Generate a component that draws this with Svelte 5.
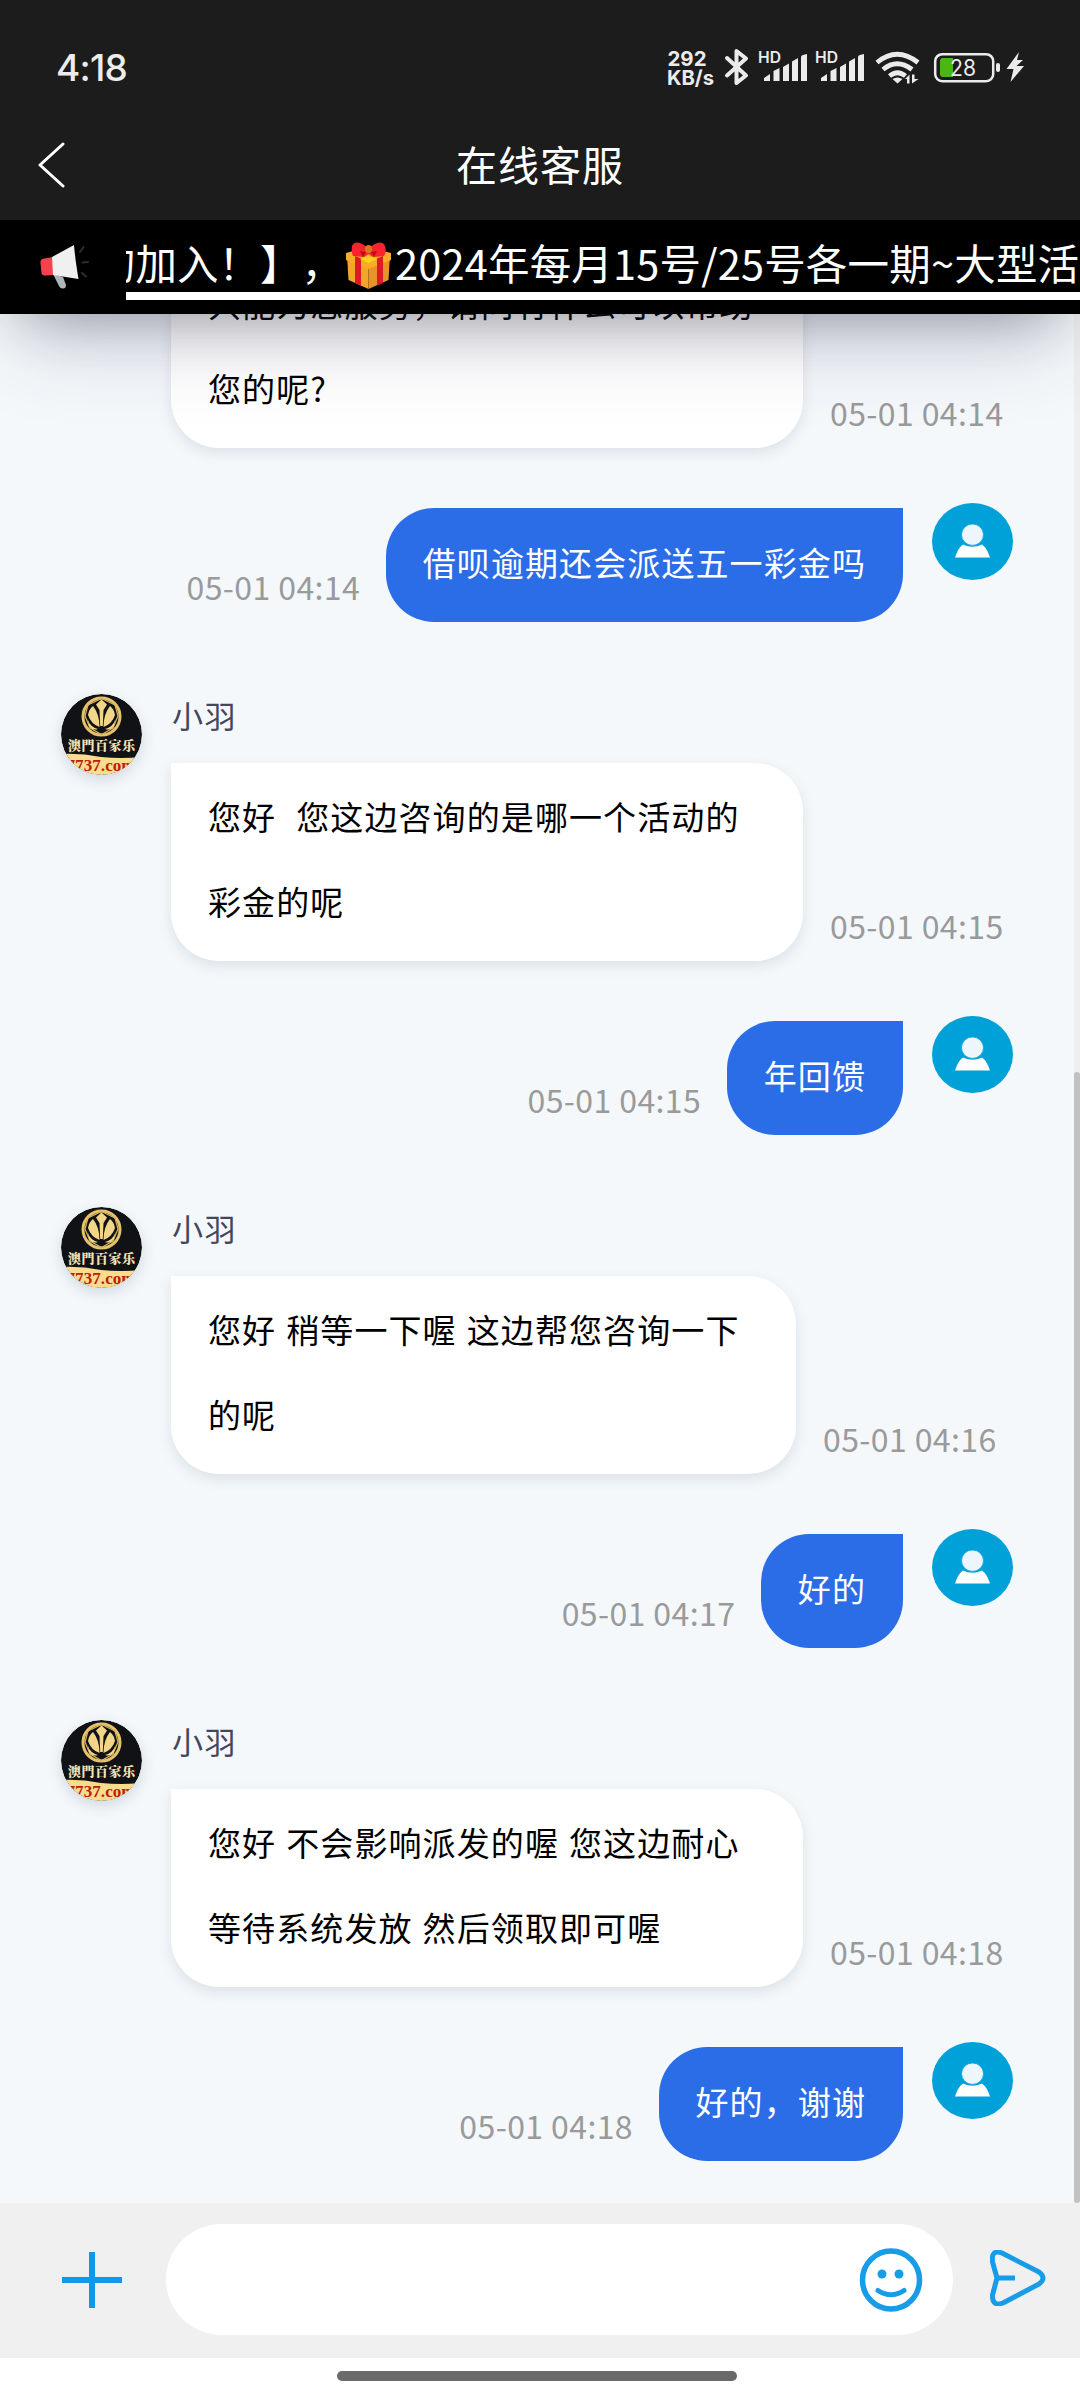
<script>
    let messages = [
        { from: 'agent', width: 632, time: '05-01 04:14', lines: ['只能为您服务，请问有什么可以帮助', '您的呢?'] },
        { from: 'user', time: '05-01 04:14', lines: ['借呗逾期还会派送五一彩金吗'] },
        { from: 'agent', width: 632, time: '05-01 04:15', lines: ['您好  您这边咨询的是哪一个活动的', '彩金的呢'] },
        { from: 'user', time: '05-01 04:15', lines: ['年回馈'] },
        { from: 'agent', width: 625, time: '05-01 04:16', lines: ['您好 稍等一下喔 这边帮您咨询一下', '的呢'] },
        { from: 'user', time: '05-01 04:17', lines: ['好的'] },
        { from: 'agent', width: 632, time: '05-01 04:18', lines: ['您好 不会影响派发的喔 您这边耐心', '等待系统发放 然后领取即可喔'] },
        { from: 'user', time: '05-01 04:18', lines: ['好的，谢谢'] }
    ]

    let draft = ''
    const signals = [104, 161]
</script>

<div class="screen">
    <header>
        <div class="status">
            <span class="clock">4:18</span>
            <svg width="372" height="50" viewBox="660 44 372 50" fill="#ebebeb">
                <g font-family="Inter, sans-serif" font-weight="700">
                    <text x="667.500" y="65.800" font-size="20.500" textLength="39" lengthAdjust="spacingAndGlyphs">292</text>
                    <text x="667" y="84.500" font-size="20" textLength="47" lengthAdjust="spacingAndGlyphs">KB/s</text>
                </g>
                <path d="M727 58 L746 75.500 L736.500 83 V51 L746 58.500 L727 75.500" fill="none" stroke="#ebebeb" stroke-width="4" stroke-linejoin="round" stroke-linecap="round" />
                {#each signals as x}
                    <g transform="translate({x + 655} 0)">
                        <text x="-1" y="63" font-size="15.500" font-family="Inter, sans-serif" font-weight="600" textLength="23" lengthAdjust="spacingAndGlyphs">HD</text>
                        <path d="M5 81 V78 L11 74 V81 Z M14.500 81 V71 L20.500 68 V81 Z M24 81 V67 L30 63.500 V81 Z M33 81 V61.500 L39 58 V81 Z M42 81 V57 Q42 55.500 44 55 L48 54 V81 Z" />
                    </g>
                {/each}
                <g fill="none" stroke="#ebebeb" stroke-width="4.800">
                    <path d="M877 62.500 Q897 46 918 62.500" />
                    <path d="M883 69.500 Q897 58 912 69.500" />
                    <path d="M889.500 76 Q897.500 69.500 905.500 76" />
                </g>
                <path d="M892.500 79 Q897.500 76 902.500 79 L897.500 83.500 Z M905 79 L909.500 74.500 V83.500 H907 V79 Z M912 83.500 V74.500 H914.500 V79 H918.500 Z" />
                <rect x="935.200" y="54.200" width="58" height="27" rx="7" fill="none" stroke="#ebebeb" stroke-width="2.500" />
                <path d="M943 58 H953 V77 H943 Q940 77 940 74 V61 Q940 58 943 58 Z" fill="#4cb714" />
                <text x="950" y="75.500" font-size="23" font-family="Inter, sans-serif" textLength="26" lengthAdjust="spacingAndGlyphs">28</text>
                <rect x="996" y="63" width="4" height="9" rx="2" />
                <path d="M1019 52 L1006.500 69 H1013.500 L1010.500 82 L1024 66 H1016.500 L1023 60 H1017 Z" />
            </svg>
        </div>
        <div class="titlebar">
            <svg class="back" width="30" height="46" viewBox="0 0 30 46">
                <path d="M26 2 L3 23 L26 44" fill="none" stroke="#fff" stroke-width="3" stroke-linecap="round" stroke-linejoin="round" />
            </svg>
            <h1>在线客服</h1>
        </div>
        <div class="notice">
            <svg class="horn" width="50" height="46" viewBox="0 0 50 46">
                <path d="M13 30 L23 33 L26 41 Q26 45 22 44.500 Q20 44 19 42 Z" fill="#aeb5bb" />
                <path d="M13 13 L4 14.500 Q0 15 .5 19 L1.500 29 Q2 32 5 31.500 L14 31 Z" fill="#f5424f" />
                <path d="M12 13 L34 1 Q35 14 38.500 35 L13 31 Z" fill="#f0f0f0" />
                <path d="M40 8 L43.500 3 M42.500 18.500 L48 18 M42 29 L46 32.500" stroke="#2b2d30" stroke-width="2" stroke-linecap="round" />
            </svg>
            <div class="marquee">
                <p>
                    <span>的加入！】，</span>
                    <svg width="45" height="48" viewBox="0 0 45 48">
                        <path d="M1 13 L22.500 20 V47 L2.500 38 Z" fill="#f5a52b" />
                        <path d="M44 13 L22.500 20 V47 L42.500 38 Z" fill="#e8922a" />
                        <path d="M0 11 L22 5 L45 11 V18 L22.500 27 L0 18 Z" fill="#f9ac24" />
                        <path d="M9 14 L15 16.500 V43.500 L9 41 Z M37 14 L31 16.500 V43.500 L37 41 Z" fill="#e01a24" />
                        <path d="M14 17 L22.500 14 L31 17 L22.500 21 Z" fill="#ffd21f" />
                        <path d="M6 4 Q8 -1 14 1 Q20 3 22.500 8 Q25 3 31 1 Q37 -1 39 4 Q41 10 38 14 L27 15 L22.500 12 L18 15 L7 14 Q5 10 6 4 Z" fill="#f8232e" />
                        <path d="M14 9 L20 10 L17 15 Z M31 9 L25 10 L28 15 Z" fill="#b80e18" />
                        <ellipse cx="22.500" cy="7" rx="3.500" ry="4" fill="#d9771c" />
                    </svg>
                    <span class="after">2024年每月15号/25号各一期~大型活动</span>
                </p>
            </div>
        </div>
    </header>

    <main>
        {#each messages as msg}
            <div class="row {msg.from}">
                {#if msg.from == 'agent'}
                    <svg class="avatar" width="81" height="81" viewBox="0 0 81 81">
                        <defs><clipPath id="round"><circle cx="40.500" cy="40.500" r="40.500" /></clipPath></defs>
                        <g clip-path="url(#round)">
                            <rect width="81" height="81" fill="#111216" />
                            <circle cx="40.500" cy="22.500" r="18.500" fill="none" stroke="#e6c36a" stroke-width="3" />
                            <path d="M40.500 4.500 L54 11 L57 22 L52 34 L40.500 40.500 L29 34 L24 22 L27 11 Z" fill="none" stroke="#d9b35c" stroke-width="1.200" />
                            <g fill="#f1d68a">
                                <path d="M40.500 5.500 L46 10.500 L42.500 16 L41.800 32 H39.200 L38.500 16 L35 10.500 Z" />
                                <path d="M32 12 Q38.500 20 38.500 33 Q30 30 27 21 Q28 15 32 12 Z M49 12 Q42.500 20 42.500 33 Q51 30 54 21 Q53 15 49 12 Z" />
                                <path d="M26.500 25 Q29 33 37 35 Q31 37 28 32 Z M54.500 25 Q52 33 44 35 Q50 37 53 32 Z" />
                            </g>
                            <text class="brand" x="7" y="55.500" textLength="67">澳門百家乐</text>
                            <path d="M0 60 Q20 59 40 63 Q60 65 81 63 V81 H0 Z" fill="#f9dc8c" />
                            <text class="site" x="5.500" y="77" textLength="69">7737.com</text>
                        </g>
                    </svg>
                    <div class="body">
                        <div class="name">小羽</div>
                        <div class="line">
                            <div class="bubble" style="width: {msg.width}px">
                                {#each msg.lines as line}<p>{line}</p>{/each}
                            </div>
                            <time>{msg.time}</time>
                        </div>
                    </div>
                {:else}
                    <time>{msg.time}</time>
                    <div class="bubble">
                        {#each msg.lines as line}<p>{line}</p>{/each}
                    </div>
                    <svg class="avatar" width="81" height="77" viewBox="0 0 81 77">
                        <ellipse cx="40.500" cy="38.500" rx="40.500" ry="38.500" fill="#00a1d9" />
                        <path d="M31 41.500 Q40.500 46 50 41.500 Q55 45 58 54.500 H23 Q26 45 31 41.500 Z" fill="#fff" />
                        <ellipse cx="40.500" cy="31.700" rx="11" ry="10.700" fill="#eef6fd" stroke="#00a1d9" stroke-width=".8" />
                    </svg>
                {/if}
            </div>
        {/each}
        <div class="scrollbar"><div class="thumb"></div></div>
    </main>

    <footer>
        <button class="plus" aria-label="更多">
            <svg width="60" height="56" viewBox="0 0 60 56"><path d="M0 28 H60 M30 0 V56" stroke="#0d98ea" stroke-width="6" /></svg>
        </button>
        <div class="field">
            <input type="text" bind:value={draft} aria-label="消息" />
            <svg width="64" height="64" viewBox="0 0 64 64" fill="none" stroke="#179ce8" stroke-width="5.500">
                <ellipse cx="32" cy="32" rx="28.500" ry="29" />
                <path d="M19 42.500 Q32 51 45 42.500" stroke-width="5" stroke-linecap="round" />
                <circle cx="23" cy="26" r="4.500" fill="#179ce8" stroke="none" />
                <circle cx="40" cy="26" r="4.500" fill="#179ce8" stroke="none" />
            </svg>
        </div>
        <button class="send" aria-label="发送">
            <svg width="56" height="56" viewBox="0 0 56 56" fill="none" stroke="#179ce8" stroke-width="5">
                <path d="M12 3 L49 22 Q57 28 49 34 L13 53 Q2 57 2.500 45 L7 28 L2.500 12 Q1 -1 12 3 Z M7 28 H25" stroke-linejoin="round" />
            </svg>
        </button>
    </footer>
    <div class="home"><span></span></div>
</div>

<style>
    :global(body) {
        margin: 0;
    }

    .screen {
        width: 1080px;
        height: 2400px;
        display: flex;
        flex-direction: column;
        overflow: hidden;
        background: #fff;
        font-family: "Noto Sans CJK SC", sans-serif;
        text-spacing-trim: space-all;
    }

    svg { display: block; flex: none; }
    p { margin: 0; }

    header {
        flex: none;
        height: 314px;
        background: #1c1c1c;
        color: #fff;
        position: relative;
        z-index: 1;
        box-shadow: 0 40px 80px -20px rgba(50, 50, 93, .25), 0 26px 52px -26px rgba(0, 0, 0, .3);
    }

    .status {
        display: flex;
        justify-content: space-between;
        align-items: flex-start;
        height: 66px;
        padding: 44px 48px 0 56px;
    }
    .clock {
        font: 500 37px/47px "Inter", sans-serif;
        letter-spacing: -.8px;
        color: #ececec;
    }

    .titlebar {
        height: 110px;
        display: flex;
        align-items: center;
        padding: 0 37px;
    }
    .titlebar h1 {
        flex: 1;
        margin: 0 30px 0 0;
        text-align: center;
        font-size: 41px;
        font-weight: 400;
        line-height: 106px;
        height: 110px;
        letter-spacing: 1px;
    }

    .notice {
        height: 94px;
        display: flex;
        background: #000;
    }
    .horn { margin: 24px 36px 0 40px; }
    .marquee {
        flex: 1;
        overflow: hidden;
        height: 72px;
        border-bottom: 8px solid #fff;
    }
    .marquee p {
        display: flex;
        margin-left: -32px;
        font-size: 41.5px;
        line-height: 84px;
        white-space: nowrap;
    }
    .marquee svg { margin: 22px 4px 0 3px; }
    .marquee .after { letter-spacing: .2px; }

    main {
        flex: none;
        position: relative;
        height: 1847px;
        padding-bottom: 42px;
        display: flex;
        flex-direction: column;
        justify-content: flex-end;
        overflow: hidden;
        background: #f4f8fb;
    }

    .row {
        display: flex;
        flex: none;
    }
    .row.user {
        justify-content: flex-end;
        align-items: flex-end;
        height: 119px;
        margin-top: 55.3px;
        padding-right: 67px;
    }
    .row.user .avatar {
        align-self: flex-start;
        margin-left: 29px;
    }
    .row.agent {
        margin-top: 71.7px;
        padding-left: 61px;
    }
    .row.agent .avatar {
        margin-right: 29px;
        border-radius: 50%;
        box-shadow: 0 5px 14px rgba(60, 80, 110, .18);
    }
    .brand {
        font: 900 13px "Noto Serif CJK SC", "Noto Sans CJK SC", serif;
        fill: #f3e3b4;
    }
    .site {
        font: bold 17px "Liberation Serif", serif;
        fill: #bd1a10;
    }

    .name {
        height: 69px;
        padding-left: 1px;
        font-size: 31px;
        letter-spacing: 1.5px;
        line-height: 42px;
        color: #42475c;
    }
    .line {
        display: flex;
        align-items: flex-end;
    }
    .bubble {
        flex: none;
        box-sizing: border-box;
        padding: 11px 37px 17px;
        font-size: 33px;
        letter-spacing: 1.1px;
        word-spacing: 1.5px;
        line-height: 85px;
        white-space: pre;
    }
    .agent .bubble {
        background: #fff;
        color: #000;
        border-radius: 0 48px 48px 48px;
        box-shadow: 0 5px 14px rgba(60, 80, 110, .13);
    }
    .user .bubble {
        padding-top: 12px;
        background: #2b6de6;
        color: #fff;
        border-radius: 48px 0 48px 48px;
    }

    time {
        margin: 0 25.5px 11px 27px;
        font-size: 32px;
        line-height: 50px;
        letter-spacing: .4px;
        color: #9a9a9a;
        white-space: nowrap;
    }

    .scrollbar {
        position: absolute;
        top: 0;
        right: 0;
        bottom: 0;
        width: 6px;
        background: #efeeee;
    }
    .thumb {
        height: 1131px;
        margin-top: 758px;
        border-radius: 3px;
        background: #c1c1c1;
    }

    footer {
        flex: none;
        box-sizing: border-box;
        height: 155px;
        display: flex;
        align-items: flex-start;
        padding-top: 21px;
        background: #f0f0f0;
    }
    button {
        border: 0;
        padding: 0;
        background: none;
    }
    .plus { margin: 28px 44px 0 62px; }
    .field {
        display: flex;
        align-items: center;
        box-sizing: border-box;
        width: 787px;
        height: 111px;
        padding: 0 30px 0 40px;
        border-radius: 56px;
        background: #fff;
    }
    .field input {
        flex: 1;
        min-width: 0;
        height: 80px;
        border: 0;
        outline: 0;
        background: transparent;
        font-size: 33px;
    }
    .send { margin: 26px 0 0 37px; }

    .home {
        flex: 1;
        display: flex;
        justify-content: center;
        padding-top: 13px;
    }
    .home span {
        width: 400px;
        height: 10px;
        margin-right: 6px;
        border-radius: 5px;
        background: #6a6a6a;
    }
</style>
